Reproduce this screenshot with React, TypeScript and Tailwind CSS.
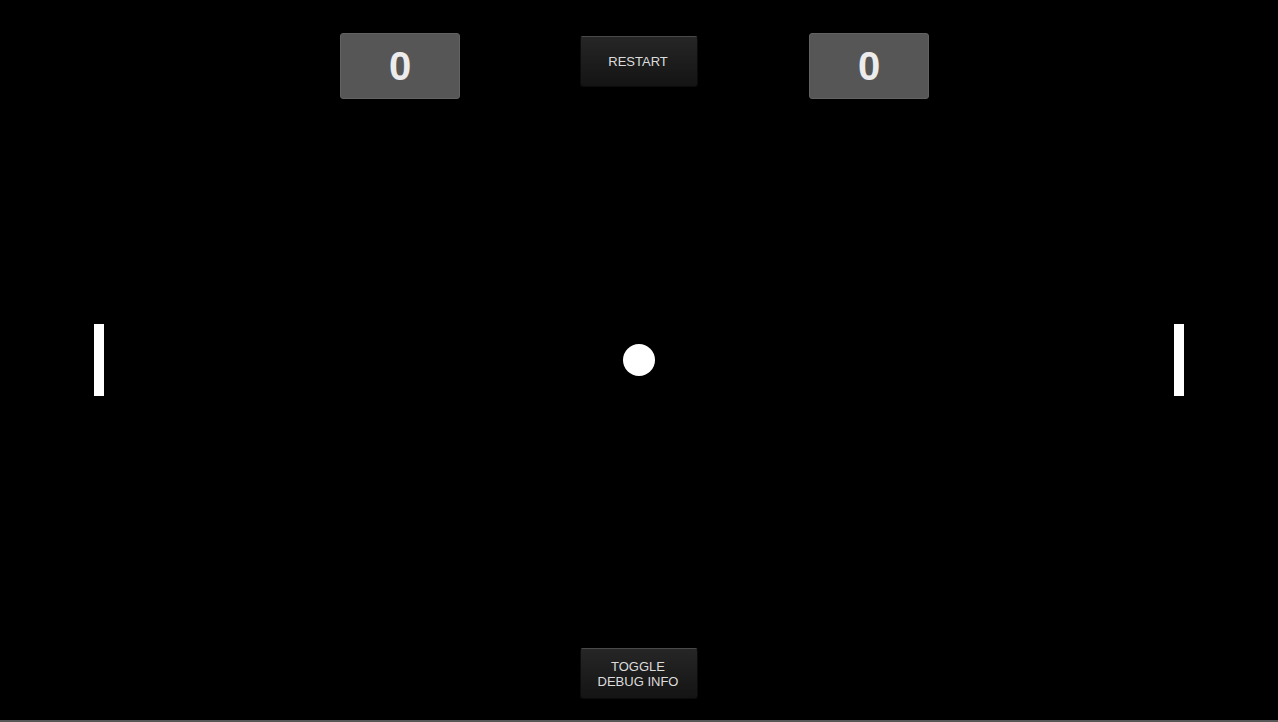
import React from "react";

function ScoreBox({ value }: { value: number }) {
  return (
    <div className="flex h-[66px] w-[120px] items-center justify-center rounded-[3px] border border-[#626262] bg-[#565656] text-[40px] font-bold leading-none text-[#ececec] shadow-[0_0_2px_rgba(0,0,0,0.8)]">
      {value}
    </div>
  );
}

function UnityButton({ children }: { children: React.ReactNode }) {
  return (
    <button className="flex h-[51px] w-[118px] flex-col items-center justify-center rounded-[3px] border border-[#0c0c0c] border-t-[#4a4a4a] bg-gradient-to-b from-[#262626] to-[#141414] pr-[2px] text-[13px] leading-[15px] text-[#dcdcdc]">
      {children}
    </button>
  );
}

function Paddle() {
  return <div className="h-[72px] w-[10px] bg-white" />;
}

export default function App() {
  const leftScore = 0;
  const rightScore = 0;

  return (
    <main
      className="flex h-[722px] w-full flex-col overflow-hidden border-b-2 border-[#585858] bg-black"
      style={{ fontFamily: '"Liberation Sans", Arial, sans-serif' }}
    >
      {/* scoreboard + restart */}
      <div className="flex items-start pl-[340px] pt-[33px]">
        <ScoreBox value={leftScore} />
        <div className="ml-[120px] mt-[3px]">
          <UnityButton>RESTART</UnityButton>
        </div>
        <div className="ml-[111px]">
          <ScoreBox value={rightScore} />
        </div>
      </div>

      {/* play field */}
      <div className="mt-[225px] flex h-[72px] items-center justify-between px-[94px]">
        <Paddle />
        <div className="h-[32px] w-[32px] rounded-full bg-white" />
        <Paddle />
      </div>

      {/* debug toggle */}
      <div className="mt-[252px] flex justify-center">
        <UnityButton>
          <span>TOGGLE</span>
          <span>DEBUG INFO</span>
        </UnityButton>
      </div>
    </main>
  );
}
